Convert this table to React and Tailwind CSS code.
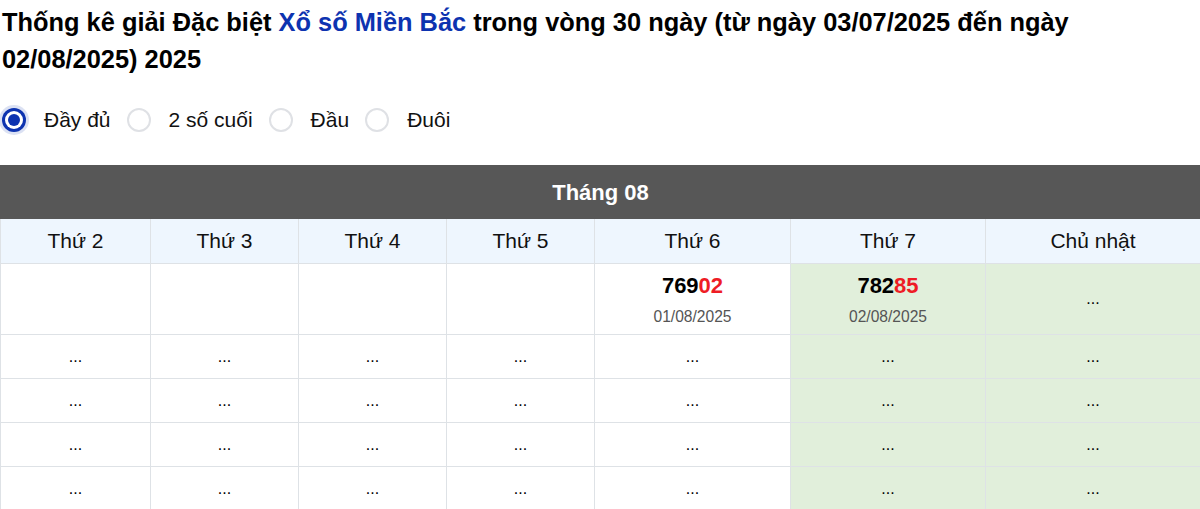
import React, { useState } from "react";

const options = ["Đầy đủ", "2 số cuối", "Đầu", "Đuôi"];
const days = ["Thứ 2", "Thứ 3", "Thứ 4", "Thứ 5", "Thứ 6", "Thứ 7", "Chủ nhật"];
const widths = ["w-[150px]", "w-[148px]", "w-[148px]", "w-[148px]", "w-[196px]", "w-[195px]", "w-[215px]"];

// first week: only Fri/Sat have results so far
const firstWeek = [null, null, null, null, { num: "76902", date: "01/08/2025" }, { num: "78285", date: "02/08/2025" }, "dots"];

const Radio = ({ checked, label, onClick }) => (
  <label className="flex items-center cursor-pointer" onClick={onClick}>
    {checked ? (
      <span className="w-6 h-6 rounded-full bg-[#0d33b0] flex items-center justify-center shadow-[0_0_0_3px_rgba(13,51,176,0.15)]">
        <span className="w-[18px] h-[18px] rounded-full bg-white flex items-center justify-center">
          <span className="w-3 h-3 rounded-full bg-[#0d33b0]" />
        </span>
      </span>
    ) : (
      <span className="w-6 h-6 rounded-full border-2 border-[#dfe1e5] bg-white" />
    )}
    <span className="ml-[18px] mr-4 text-[21px] text-[#111]">{label}</span>
  </label>
);

const Dots = () => <span className="text-[16px] text-black">...</span>;

const Result = ({ num, date }) => (
  <div className="flex flex-col items-center">
    <div className="text-[22px] font-bold leading-[28px] text-black">
      {num.slice(0, 3)}
      <span className="text-[#ee1c25]">{num.slice(3)}</span>
    </div>
    <div className="mt-[7px] text-[15.6px] leading-[20px] text-[#555]">{date}</div>
  </div>
);

export default function App() {
  const [mode, setMode] = useState(0);

  return (
    <div className="bg-white w-[1200px] h-[509px] overflow-hidden font-['Liberation_Sans',Arial,sans-serif]">
      <h1 className="pt-[4px] pl-[2px] text-[25.4px] leading-[37px] font-bold text-black">
        Thống kê giải Đặc biệt <span className="text-[#0d33b0]">Xổ số Miền Bắc</span> trong vòng 30 ngày (từ ngày 03/07/2025 đến ngày 02/08/2025) 2025
      </h1>

      <div className="flex items-center mt-[26px] pl-[2px] h-[32px]">
        {options.map((o, i) => (
          <Radio key={o} label={o} checked={mode === i} onClick={() => setMode(i)} />
        ))}
      </div>

      <table className="mt-[29px] w-[1200px] table-fixed border-collapse border border-[#dee2e6]">
        <colgroup>
          {widths.map((w, i) => (
            <col key={i} className={w} />
          ))}
        </colgroup>
        <thead>
          <tr>
            <th colSpan={7} className="h-[53px] bg-[#575757] text-white text-[22px] font-bold text-center border border-[#575757]">
              Tháng 08
            </th>
          </tr>
          <tr>
            {days.map((d) => (
              <th key={d} className="h-[45px] bg-[#eef6fe] text-[21px] font-normal text-[#111] text-center border border-[#dee2e6]">
                {d}
              </th>
            ))}
          </tr>
        </thead>
        <tbody>
          <tr>
            {firstWeek.map((c, i) => (
              <td
                key={i}
                className={`h-[71px] text-center align-middle border border-[#dee2e6] ${i >= 5 ? "bg-[#e1efdb]" : "bg-white"}`}
              >
                {c === "dots" ? <Dots /> : c ? <Result {...c} /> : null}
              </td>
            ))}
          </tr>
          {[0, 1, 2, 3].map((r) => (
            <tr key={r}>
              {days.map((d, i) => (
                <td
                  key={d}
                  className={`h-[44px] text-center align-middle border border-[#dee2e6] ${i >= 5 ? "bg-[#e1efdb]" : "bg-white"}`}
                >
                  <Dots />
                </td>
              ))}
            </tr>
          ))}
        </tbody>
      </table>
    </div>
  );
}
